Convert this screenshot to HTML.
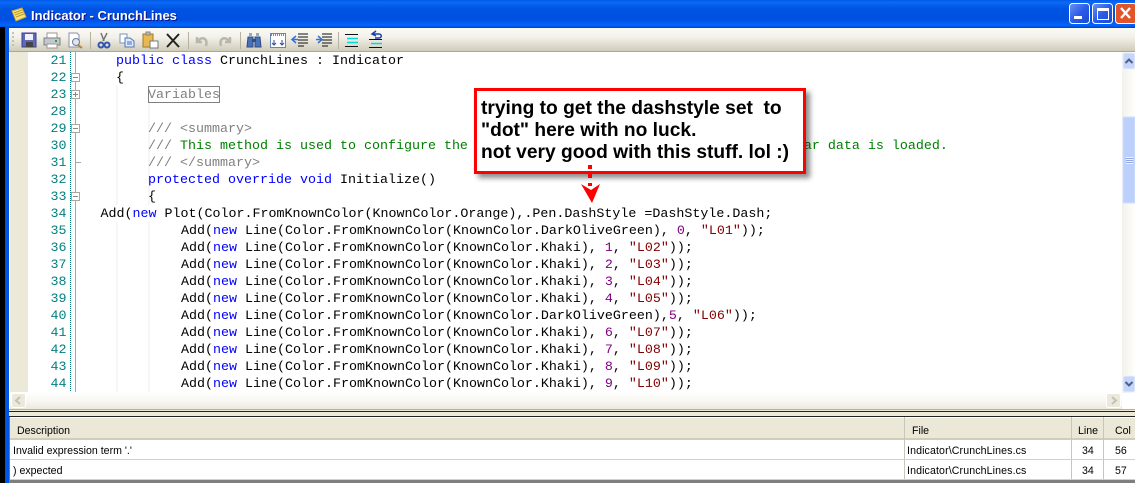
<!DOCTYPE html>
<html><head><meta charset="utf-8"><style>
html,body{margin:0;padding:0;width:1135px;height:483px;overflow:hidden;background:#fff}
div,span{position:absolute;box-sizing:border-box}
#t{left:0;top:0;width:1135px;height:28px;background:linear-gradient(#0058e6 0,#0a6af5 8%,#0054e3 30%,#0050e0 70%,#0066ff 90%,#0040c0 100%)}
#tt{left:31px;top:8px;font:bold 13px "Liberation Sans",sans-serif;color:#fff;text-shadow:1px 1px 0 #0f1089;white-space:pre}
#lb1{left:0;top:27px;width:5px;height:456px;background:#000}
#lb2{left:5px;top:27px;width:4px;height:456px;background:#0055e5}
#tb{left:9px;top:28px;width:1126px;height:24px;background:linear-gradient(#fbfaf6,#f3f1e9 40%,#cfccb9);border-bottom:1px solid #aca899}
#ed{left:9px;top:52px;width:1126px;height:341px;background:#fff}
#mg{left:10px;top:52px;width:18px;height:340px;background:#ece9d8}
#c,#c div{font:13.33px/17px "Liberation Mono",monospace;white-space:pre;color:#000}
#c div{height:17px}
.n{color:#008080 !important;width:30px;left:36.500px;text-align:right}
b{font-weight:normal;color:#00f}i{font-style:normal;color:#800080}u{text-decoration:none;color:#800000}
em{font-style:normal;color:#808080}s{text-decoration:none;color:#008000}
#vs{left:1122px;top:52px;width:13px;height:341px;background:linear-gradient(90deg,#f3f1ec,#fefefb)}
#hs{left:10px;top:392px;width:1112px;height:17px;background:linear-gradient(#fff,#f8f7f2 50%,#ece9df)}
#sp{left:9px;top:409px;width:1126px;height:8px;background:#ece9d8;border-top:1px solid #b5b19f}
.bk{left:0;width:1126px;height:1px;background:#222}
#lh{left:10px;top:417px;width:1125px;height:23px;background:#ebe8d8;border-bottom:2px solid #d0cdb8;border-top:1px solid #fff}
.h,.r{font:10.6px/20px "Liberation Sans",sans-serif;color:#000;white-space:pre}
.f{letter-spacing:.12px}
.vl{top:417px;width:1px;height:63px;background:#c8c6bb}
.hl{left:10px;width:1125px;height:1px;background:#d4d0c8}
#bt{left:9px;top:480px;width:1126px;height:3px;background:#7f7f7f}
#lm{left:9px;top:417px;width:1px;height:63px;background:#777}
#bx{left:474px;top:88px;width:332px;height:86px;border:3px solid #f00;background:#fff;box-shadow:4px 4px 5px rgba(0,0,0,.45)}
#bt2{left:481px;top:98px;font:bold 19.200px/22px "Liberation Sans",sans-serif;color:#000;white-space:pre}
</style></head><body>
<div id="t"></div>
<svg style="position:absolute;left:11px;top:7px" width="16" height="16" viewBox="0 0 16 16"><path d="M1 4 11 1 15 10 5 14Z" fill="#f7e27a" stroke="#c9a83c"/><path d="M3 6 11 3M4 8 12 5M5 10 13 7" stroke="#b89a30"/></svg>
<div id="tt">Indicator - CrunchLines</div>
<svg style="position:absolute;left:1069px;top:3px" width="66" height="22" viewBox="0 0 66 22">
<defs><linearGradient id="bl" x1="0" y1="0" x2="1" y2="1"><stop offset="0" stop-color="#6f93f0"/><stop offset=".5" stop-color="#2a5ce8"/><stop offset="1" stop-color="#1a48d0"/></linearGradient></defs>
<rect x=".5" y=".5" width="20" height="20" rx="3" fill="url(#bl)" stroke="#fff"/>
<rect x="5" y="13" width="8" height="3" fill="#fff"/>
<rect x="23.5" y=".5" width="20" height="20" rx="3" fill="url(#bl)" stroke="#fff"/>
<rect x="28.5" y="5.5" width="11" height="11" fill="none" stroke="#fff"/><rect x="28" y="5" width="12" height="3" fill="#fff"/>
<rect x="46.5" y=".5" width="21" height="20" rx="3" fill="#e2552a" stroke="#fff"/>
<path d="M52 5 61 15M61 5 52 15" stroke="#fff" stroke-width="2.4"/>
</svg>
<div id="lb1"></div><div id="lb2"></div>
<div id="tb"></div>
<svg style="position:absolute;left:0;top:28px" width="400" height="24" viewBox="0 28 400 24">
<g fill="#c5c2b0"><rect x="12" y="32" width="2" height="2"/><rect x="12" y="36" width="2" height="2"/><rect x="12" y="40" width="2" height="2"/><rect x="12" y="44" width="2" height="2"/></g>
<path d="M90.500 32V49M188.500 32V49M240.500 32V49M338.500 32V49" stroke="#b5b2a2"/>
<path d="M22 33H36V47H22Z" fill="#6068b8" stroke="#3a4090"/><rect x="25" y="34" width="8" height="6" fill="#f0f0f8"/><rect x="26" y="42" width="7" height="5" fill="#444"/>
<path d="M47 33H57V38H47Z" fill="#fff" stroke="#999"/><path d="M44 38H60V45H44Z" fill="#c4c8cc" stroke="#7c8088"/><rect x="47" y="44" width="10" height="4" fill="#fff" stroke="#999"/><rect x="55" y="40" width="2" height="2" fill="#2a2"/>
<path d="M69 33H77L79 35V47H69Z" fill="#fff" stroke="#8a8fa8"/><circle cx="76" cy="42" r="3.500" fill="#d8e8f8" stroke="#778"/><path d="M78 45 82 48" stroke="#c08030" stroke-width="2"/>
<path d="M101 33 104 41M107 33 103 41" stroke="#777" stroke-width="1.500"/><circle cx="101" cy="45" r="2.500" fill="none" stroke="#3355b0" stroke-width="2"/><circle cx="107" cy="45" r="2.500" fill="none" stroke="#3355b0" stroke-width="2"/>
<path d="M120 34H127V43H120Z" fill="#fff" stroke="#7a94c0"/><path d="M125 38H130L134 41V47H125Z" fill="#dde8f8" stroke="#5577b5"/><path d="M127 42H132M127 44H132" stroke="#4a70c0"/>
<path d="M143 34H153V47H143Z" fill="#eab850" stroke="#9a7a30"/><rect x="146" y="32" width="4" height="3" fill="#bbb" stroke="#887"/><path d="M150 41H158V48H150Z" fill="#fff" stroke="#778"/>
<path d="M167 34 179 47M179 34 167 47" stroke="#222" stroke-width="2"/>
<path d="M197 37 197 42 202 42M198 41C202 36 208 38 206 46" fill="none" stroke="#b9b7ab" stroke-width="2.500"/>
<path d="M230 37 230 42 225 42M229 41C225 36 219 38 221 46" fill="none" stroke="#b9b7ab" stroke-width="2.500"/>
<path d="M248 37H253V47H247ZM255 37H260L261 47H255Z" fill="#4a70b8" stroke="#2f4a85"/><rect x="252" y="39" width="4" height="3" fill="#2f4a85"/><rect x="249" y="33" width="3" height="4" fill="#9ab"/><rect x="256" y="33" width="3" height="4" fill="#9ab"/>
<rect x="270.500" y="33.500" width="15" height="14" fill="#fff" stroke="#6a86b8"/><path d="M271 35H285" stroke="#7a8a9a" stroke-dasharray="1 1" stroke-width="2"/><path d="M274 40V45M272 43 274 45 276 43M282 40V45M280 43 282 45 284 43" stroke="#2a4a9a" fill="none"/>
<path d="M298 34H308M298 37H308M298 40H308M298 43H308M298 46H304" stroke="#111"/><path d="M293 39.500H298M296 36 292 39.500 296 43" stroke="#3a70d0" fill="none" stroke-width="1.500"/>
<path d="M322 34H332M322 37H332M322 40H332M322 43H332M322 46H328" stroke="#111"/><path d="M316 39.500H321M318 36 322 39.500 318 43" stroke="#3a70d0" fill="none" stroke-width="1.500"/>
<path d="M345 34.500H358M345 46.500H358" stroke="#111"/><path d="M347 38.500H358M347 42.500H358" stroke="#00dcdc" stroke-width="1.500"/>
<path d="M369 39.500H382M369 47.500H382" stroke="#111"/><path d="M371 43.500H382" stroke="#00dcdc" stroke-width="1.500"/><path d="M373 34H379C382 34 382 38 379 38H375M376 31 372 34 376 36" fill="none" stroke="#1a3fb0" stroke-width="1.500"/>
</svg>
<div id="ed"></div><div id="mg"></div>
<svg style="position:absolute;left:0;top:52px" width="240" height="340" viewBox="0 52 240 340">
<path d="M70.500 52V392" stroke="#008080" stroke-dasharray="1 1"/>
<path d="M75.500 52V392" stroke="#a8a89c"/>
<path d="M117 85V205M117 222V392M149 103V205M149 222V392" stroke="#eee"/>
<path d="M76 162.500H81" stroke="#a8a89c"/>
<g fill="#fff" stroke="#a8a89c"><rect x="71.500" y="73.500" width="8" height="8"/><rect x="71.500" y="90.500" width="8" height="8"/><rect x="71.500" y="124.500" width="8" height="8"/><rect x="71.500" y="192.500" width="8" height="8"/></g>
<path d="M73 77.500H78M73 94.500H78M75.500 92V97M73 128.500H78M73 196.500H78" stroke="#888"/>
<rect x="148.500" y="86.500" width="71" height="16" fill="#fff" stroke="#808080"/>
</svg>
<div id="c" style="left:0;top:53px;width:1120px;height:340px">
<div class="n" style="top:0">21</div><div class="n" style="top:17px">22</div><div class="n" style="top:34px">23</div><div class="n" style="top:51px">28</div><div class="n" style="top:68px">29</div><div class="n" style="top:85px">30</div><div class="n" style="top:102px">31</div><div class="n" style="top:119px">32</div><div class="n" style="top:136px">33</div><div class="n" style="top:153px">34</div><div class="n" style="top:170px">35</div><div class="n" style="top:187px">36</div><div class="n" style="top:204px">37</div><div class="n" style="top:221px">38</div><div class="n" style="top:238px">39</div><div class="n" style="top:255px">40</div><div class="n" style="top:272px">41</div><div class="n" style="top:289px">42</div><div class="n" style="top:306px">43</div><div class="n" style="top:323px">44</div>
<div style="left:116px;top:0"><b>public class</b> CrunchLines : Indicator</div>
<div style="left:116px;top:17px">{</div>
<div style="left:148px;top:34px"><em>Variables</em></div>
<div style="left:148px;top:68px"><em>/// &lt;summary&gt;</em></div>
<div style="left:148px;top:85px"><em>///</em> <s>This method is used to configure the indicator and is called once before any bar data is loaded.</s></div>
<div style="left:148px;top:102px"><em>/// &lt;/summary&gt;</em></div>
<div style="left:148px;top:119px"><b>protected override void</b> Initialize()</div>
<div style="left:148px;top:136px">{</div>
<div style="left:100.500px;top:153px">Add(<b>new</b> Plot(Color.FromKnownColor(KnownColor.Orange),.Pen.DashStyle =DashStyle.Dash;</div>
<div style="left:181px;top:170px">Add(<b>new</b> Line(Color.FromKnownColor(KnownColor.DarkOliveGreen), <i>0</i>, <u>"L01"</u>));</div>
<div style="left:181px;top:187px">Add(<b>new</b> Line(Color.FromKnownColor(KnownColor.Khaki), <i>1</i>, <u>"L02"</u>));</div>
<div style="left:181px;top:204px">Add(<b>new</b> Line(Color.FromKnownColor(KnownColor.Khaki), <i>2</i>, <u>"L03"</u>));</div>
<div style="left:181px;top:221px">Add(<b>new</b> Line(Color.FromKnownColor(KnownColor.Khaki), <i>3</i>, <u>"L04"</u>));</div>
<div style="left:181px;top:238px">Add(<b>new</b> Line(Color.FromKnownColor(KnownColor.Khaki), <i>4</i>, <u>"L05"</u>));</div>
<div style="left:181px;top:255px">Add(<b>new</b> Line(Color.FromKnownColor(KnownColor.DarkOliveGreen),<i>5</i>, <u>"L06"</u>));</div>
<div style="left:181px;top:272px">Add(<b>new</b> Line(Color.FromKnownColor(KnownColor.Khaki), <i>6</i>, <u>"L07"</u>));</div>
<div style="left:181px;top:289px">Add(<b>new</b> Line(Color.FromKnownColor(KnownColor.Khaki), <i>7</i>, <u>"L08"</u>));</div>
<div style="left:181px;top:306px">Add(<b>new</b> Line(Color.FromKnownColor(KnownColor.Khaki), <i>8</i>, <u>"L09"</u>));</div>
<div style="left:181px;top:323px">Add(<b>new</b> Line(Color.FromKnownColor(KnownColor.Khaki), <i>9</i>, <u>"L10"</u>));</div>
</div>
<div id="vs"></div>
<svg style="position:absolute;left:1122px;top:52px" width="13" height="341" viewBox="0 0 13 341">
<rect x="1" y="1" width="12" height="16" rx="2" fill="#c5d5fb" stroke="#eaf0ff"/><path d="M3.500 11 7 7.500 10.500 11" fill="none" stroke="#4d6185" stroke-width="2"/>
<rect x="1" y="65" width="12" height="86" fill="#bcd0fb" stroke="#d4e0fd"/><path d="M4 105.500H11M4 107.500H11M4 109.500H11M4 111.500H11" stroke="#eef3ff"/><path d="M4 106.500H11M4 108.500H11M4 110.500H11" stroke="#8fa8e0"/>
<rect x="1" y="324" width="12" height="16" rx="2" fill="#c5d5fb" stroke="#eaf0ff"/><path d="M3.500 330 7 333.500 10.500 330" fill="none" stroke="#4d6185" stroke-width="2"/>
</svg>
<div id="hs"></div>
<svg style="position:absolute;left:10px;top:392px" width="1112" height="17" viewBox="0 0 1112 17">
<rect x="1.500" y="1.500" width="14" height="14" rx="2" fill="#ece9dc" stroke="#fff"/><path d="M10 5 6 8.500 10 12" fill="none" stroke="#c4c2b8" stroke-width="2"/>
<rect x="1096.500" y="1.500" width="14" height="14" rx="2" fill="#ece9dc" stroke="#fff"/><path d="M1102 5 1106 8.500 1102 12" fill="none" stroke="#c4c2b8" stroke-width="2"/>
</svg>
<div id="sp"><div class="bk" style="top:1px"></div><div class="bk" style="top:6px"></div></div>
<div id="lh"></div><div id="lm"></div>
<div class="h" style="left:17px;top:421px">Description</div>
<div class="h" style="left:912px;top:421px">File</div>
<div class="h" style="left:1078px;top:421px">Line</div>
<div class="h" style="left:1115px;top:421px">Col</div>
<div class="vl" style="left:904px"></div><div class="vl" style="left:1071px"></div><div class="vl" style="left:1103px"></div>
<div class="hl" style="top:459px"></div><div class="hl" style="top:479px"></div>
<div class="r" style="left:13px;top:441px">Invalid expression term '.'</div>
<div class="r f" style="left:907px;top:441px">Indicator\CrunchLines.cs</div>
<div class="r" style="left:1082px;top:441px">34</div><div class="r" style="left:1115px;top:441px">56</div>
<div class="r" style="left:13px;top:461px">) expected</div>
<div class="r f" style="left:907px;top:461px">Indicator\CrunchLines.cs</div>
<div class="r" style="left:1082px;top:461px">34</div><div class="r" style="left:1115px;top:461px">57</div>
<div id="bt"></div>
<div id="bx"></div>
<div id="bt2">trying to get the dashstyle set  to
"dot" here with no luck.
not very good with this stuff. lol :)</div>
<svg style="position:absolute;left:578px;top:164px" width="26" height="42" viewBox="578 164 26 42">
<path d="M590 165V186" stroke="#f00" stroke-width="4" stroke-dasharray="4 5" fill="none"/>
<path d="M581 184 591 190 600 184 592 203Z" fill="#f00"/>
</svg>
</body></html>
